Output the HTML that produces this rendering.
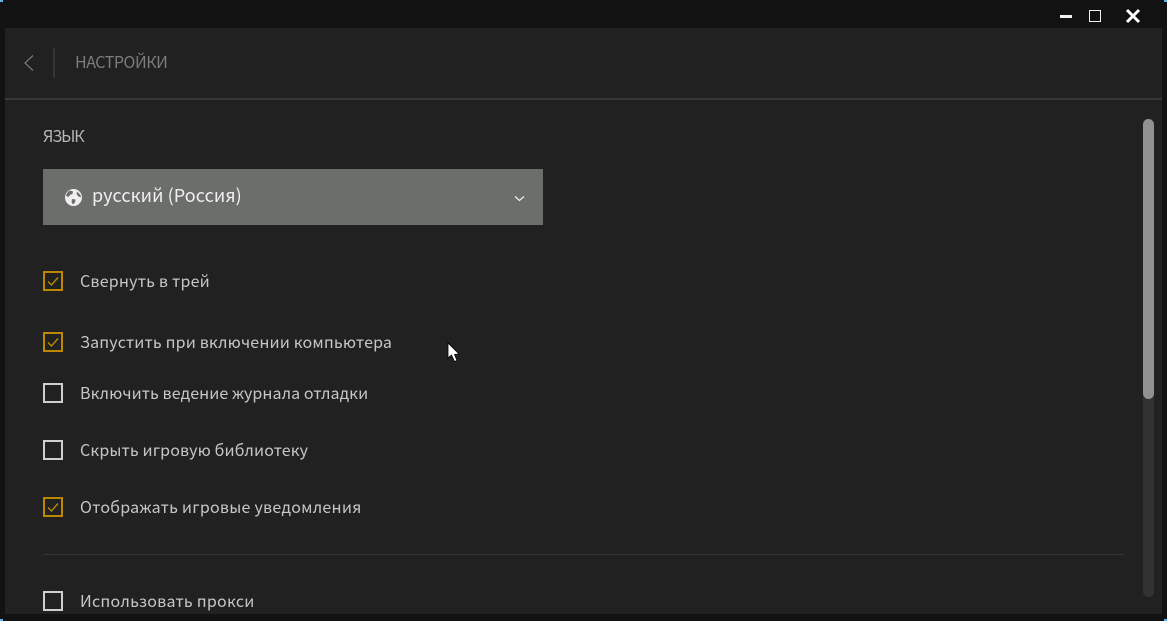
<!DOCTYPE html>
<html lang="ru"><head><meta charset="utf-8"><title>Настройки</title>
<style>
html,body{margin:0;padding:0;width:1167px;height:621px;overflow:hidden;background:#121212}
body{position:relative;font-family:"Noto Sans CJK SC","Liberation Sans",sans-serif;color:#c4c4c4}
.a{position:absolute}
#main{left:5px;top:28px;width:1157px;height:586px;background:#212121}
.t{position:absolute;left:80px;font-size:16px;line-height:22px;white-space:nowrap;color:#c6c6c6}
.c{position:absolute;left:43px;width:16px;height:16px;border:2px solid #cfcfcf}
.c.on{border-color:#bd8800}
.c svg{position:absolute;left:0;top:0}
.b{position:absolute;background:#5db4f0}
</style></head><body>
<div class="a" id="main"></div>
<div class="b" style="left:0;top:0;width:3px;height:2px"></div>
<div class="b" style="left:1164px;top:0;width:3px;height:2px"></div>
<div class="b" style="left:0;top:619px;width:3px;height:2px"></div>
<div class="b" style="left:1164px;top:619px;width:3px;height:2px"></div>
<div class="a" style="left:1060px;top:15px;width:12px;height:3px;background:#f0f0f0"></div>
<div class="a" style="left:1089px;top:10px;width:10px;height:10px;border:1px solid #f0f0f0"></div>
<svg class="a" style="left:1125px;top:8px" width="16" height="16"><path d="M2 2L14 14M14 2L2 14" stroke="#fff" stroke-width="3"/></svg>
<svg class="a" style="left:23px;top:54px" width="12" height="18"><path d="M10 1.5L2 9L10 16.5" fill="none" stroke="#777" stroke-width="1.2"/></svg>
<div class="a" style="left:53px;top:48px;width:2px;height:30px;background:#363636"></div>
<div class="a" style="left:75px;top:50px;font-size:16px;line-height:22px;color:#7c7c7c;letter-spacing:-.45px">НАСТРОЙКИ</div>
<div class="a" style="left:43px;top:124px;font-size:16px;line-height:22px;color:#b8b8b8;letter-spacing:-1.1px">ЯЗЫК</div>
<div class="a" style="left:5px;top:98px;width:1157px;height:2px;background:#373737"></div>
<div class="a" style="left:43px;top:169px;width:500px;height:56px;background:#6c6e6c"></div>
<svg class="a" style="left:65px;top:189px" width="17" height="17" viewBox="0 0 17 17"><circle cx="8.5" cy="8.5" r="8.500" fill="#f0f0f0"/><path d="M5 1.500L8 2.500 7.500 5 5 6 3.500 8 1 7C1.500 4.500 3 2.500 5 1.500zM7 10L10.500 10.500 10 13.500 8 15.500 6.500 13zM12 2.500L15.500 6 16 8.500 13.500 7.500 11.500 5z" fill="#6c6e6c"/></svg>
<div class="a" style="left:92px;top:182px;font-size:18px;line-height:26px;color:#f0f0f0;white-space:nowrap;letter-spacing:.07px">русский (Россия)</div>
<svg class="a" style="left:514px;top:195px" width="11" height="7"><path d="M1 1.500L5.500 5.500L10 1.500" fill="none" stroke="#f0f0f0" stroke-width="1.200"/></svg>

<div class="c on" style="top:271px"><svg width="16" height="16"><path d="M3 8.500L6.500 12L13 4.500" fill="none" stroke="#bd8800" stroke-width="1.400"/></svg></div>
<div class="t" style="top:269px;letter-spacing:.21px">Свернуть в трей</div>
<div class="c on" style="top:332px"><svg width="16" height="16"><path d="M3 8.500L6.500 12L13 4.500" fill="none" stroke="#bd8800" stroke-width="1.400"/></svg></div>
<div class="t" style="top:330px;letter-spacing:.16px">Запустить при включении компьютера</div>
<div class="c" style="top:383px"></div>
<div class="t" style="top:381px;letter-spacing:.07px">Включить ведение журнала отладки</div>
<div class="c" style="top:440px"></div>
<div class="t" style="top:438px;letter-spacing:.12px">Скрыть игровую библиотеку</div>
<div class="c on" style="top:497px"><svg width="16" height="16"><path d="M3 8.500L6.500 12L13 4.500" fill="none" stroke="#bd8800" stroke-width="1.400"/></svg></div>
<div class="t" style="top:495px;letter-spacing:.24px">Отображать игровые уведомления</div>
<div class="a" style="left:43px;top:554px;width:1081px;height:1px;background:#343434"></div>
<div class="c" style="top:591px"></div>
<div class="t" style="top:589px;letter-spacing:.24px">Использовать прокси</div>

<div class="a" style="left:1143px;top:119px;width:11px;height:478px;border-radius:6px;background:#323232"></div>
<div class="a" style="left:1143px;top:119px;width:11px;height:280px;border-radius:6px;background:#929292"></div>
<svg class="a" style="left:447px;top:342px" width="14" height="21"><path d="M1 1L1 16L4.500 13L7.500 19.500L10 18.500L7.500 12.500L12 12Z" fill="#fff" stroke="#000" stroke-width=".8"/></svg>
</body></html>
